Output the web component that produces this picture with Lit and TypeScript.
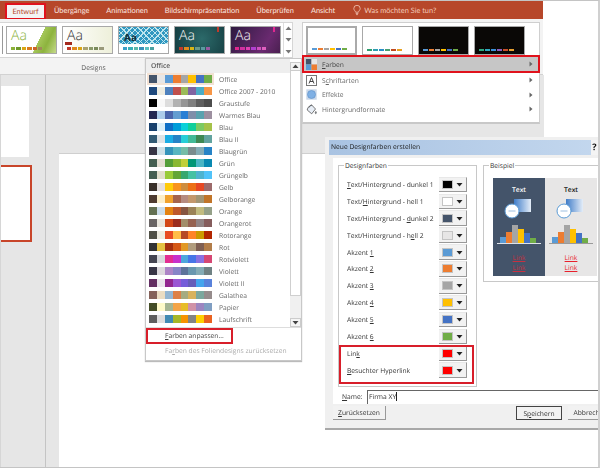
import { LitElement, html, css, svg } from "lit";
import { customElement } from "lit/decorators.js";

const TABS = ["Übergänge", "Animationen", "Bildschirmpräsentation", "Überprüfen", "Ansicht"];

const SCHEMES: [string, string[]][] = [
  ["Office", ["44546a", "e7e6e6", "5b9bd5", "ed7d31", "a5a5a5", "ffc000", "4472c4", "70ad47"]],
  ["Office 2007 - 2010", ["1f497d", "eeece1", "4f81bd", "c0504d", "9bbb59", "8064a2", "4bacc6", "f79646"]],
  ["Graustufe", ["000000", "f8f8f8", "dddddd", "b2b2b2", "969696", "808080", "5f5f5f", "4d4d4d"]],
  ["Warmes Blau", ["242852", "acccea", "4a66ac", "629dd1", "297fd5", "7f8fa9", "5aa2ae", "9d90a0"]],
  ["Blau", ["17406d", "dbeff9", "0f6fc6", "009dd9", "0bd0d9", "10cf9b", "7cca62", "a5c249"]],
  ["Blau II", ["335b74", "dfe3e5", "1cade4", "2683c6", "27ced7", "42ba97", "3e8853", "62a39f"]],
  ["Blaugrün", ["373545", "cee0e6", "3494ba", "58b6c0", "75bda7", "7a8c8e", "84acb6", "2683c6"]],
  ["Grün", ["455f51", "e3ded1", "549e39", "8ab833", "c0cf3a", "029676", "4ab5c4", "0989b1"]],
  ["Grüngelb", ["455f51", "e2dfcc", "99cb38", "63a537", "37a76f", "44c1a3", "4eb3cf", "51c3f9"]],
  ["Gelb", ["39302a", "e5dedb", "ffca08", "f8931d", "ce8d3e", "ec7016", "e64823", "9c6a6a"]],
  ["Gelborange", ["4e3b30", "fbeec9", "f0a22e", "a5644e", "b58b80", "c3986d", "a19574", "c17529"]],
  ["Orange", ["637052", "ccddea", "e48312", "bd582c", "865640", "9b8357", "c2bc80", "94a088"]],
  ["Orangerot", ["696464", "e9e5dc", "d34817", "9b2d1f", "a28e6a", "956251", "918485", "855d5d"]],
  ["Rotorange", ["505046", "eeece0", "e84c22", "ffbd47", "b64926", "ff8427", "cc9900", "b22600"]],
  ["Rot", ["323232", "e5c243", "a5300f", "d55816", "e19825", "b19c7d", "7f5f52", "b27d49"]],
  ["Rotviolett", ["454551", "d8d9dc", "e32d91", "c830cc", "4ea6dc", "4775e7", "8971e1", "d54773"]],
  ["Violett", ["373545", "dcd8dc", "ad84c6", "8784c7", "5d739a", "6997af", "84acb6", "6f8183"]],
  ["Violett II", ["632e62", "eae5eb", "92278f", "9b57d3", "755dd9", "665eb8", "45a5ed", "5982db"]],
  ["Galathea", ["85625a", "ebddc3", "94b6d2", "dd8047", "a5ab81", "d8b25c", "7ba79d", "968c8c"]],
  ["Papier", ["444d26", "fefac9", "a5b592", "f3a447", "e7bc29", "d092a7", "9c85c0", "809ec2"]],
  ["Laufschrift", ["5e5e5e", "dddddd", "418ab3", "a6b727", "f69200", "838383", "fecf00", "e96220"]],
];

const THUMBS = [
  { cls: "t-green", strip: ["8cb13a", "6f9a2a", "d9a514", "d97a1e", "c9642a", "a08a5a"] },
  { cls: "t-cream", strip: ["c0392b", "e08a1e", "d9a514", "a9a26f", "8b9a6a", "7a8a5a", "9a9a7a"] },
  { cls: "t-lattice", strip: ["3aa0c8", "3ab0b8", "5ab8a8", "3a90b8", "5ac0c0", "4aa0a0"] },
  { cls: "t-teal", strip: ["c0392b", "e08a1e", "d9b514", "6a9a8a", "5a9aa0", "9a5aa0"] },
  { cls: "t-purple", strip: ["e0288f", "d030a0", "e040b0", "b040d0", "d050c0", "e060c0"] },
];
const VARIANTS = [
  { cls: "v-white selected", strip: ["5b9bd5", "ed7d31", "a5a5a5", "ffc000", "4472c4", "70ad47"] },
  { cls: "v-white", strip: ["2e9e6e", "2e9eb0", "2a8fc8", "4aa070", "c04a20", "e8a020"] },
  { cls: "v-black", strip: ["5b9bd5", "ed7d31", "a5a5a5", "ffc000", "4472c4", "70ad47"] },
  { cls: "v-black", strip: ["2ea87e", "2ea8c0", "3a90d8", "8a60c0", "c8502a", "e8a030"] },
];

const COLOR_ROWS = [
  [html`<u>T</u>ext/Hintergrund - dunkel 1`, "000000"],
  [html`Text/<u>H</u>intergrund - hell 1`, "ffffff"],
  [html`Text/Hintergrund - <u>d</u>unkel 2`, "44546a"],
  [html`Text/Hintergrund - h<u>e</u>ll 2`, "e7e6e6"],
  [html`Akzent <u>1</u>`, "5b9bd5"],
  [html`Akzent <u>2</u>`, "ed7d31"],
  [html`Akzent <u>3</u>`, "a5a5a5"],
  [html`Akzent <u>4</u>`, "ffc000"],
  [html`Akzent <u>5</u>`, "4472c4"],
  [html`Akzent <u>6</u>`, "70ad47"],
] as const;
const LINK_ROWS = [
  [html`Lin<u>k</u>`, "ff0000"],
  [html`<u>B</u>esuchter Hyperlink`, "ff0000"],
] as const;

const caret = svg`<svg width="7" height="5" viewBox="0 0 7 5"><path d="M0.5 1h6L3.5 4.5z" fill="currentColor"/></svg>`;
const caretUp = svg`<svg width="7" height="5" viewBox="0 0 7 5"><path d="M0.5 4h6L3.5 0.5z" fill="currentColor"/></svg>`;
const sub = svg`<svg width="4" height="6" viewBox="0 0 4 6"><path d="M0.5 0.5v5L3.5 3z" fill="#666"/></svg>`;

@customElement("app-root")
export class AppRoot extends LitElement {
  static styles = css`
    :host { display: block; width: 600px; height: 468px; overflow: hidden; background: #fff;
      font-family: "Open Sans", "Noto Sans", sans-serif; font-size: 6.7px; color: #444; text-rendering: geometricPrecision; }
    u { text-underline-offset: 1px; text-decoration-thickness: 0.6px; }
    .app { position: relative; width: 600px; height: 468px; box-sizing: border-box;
      border-top: 1px solid #c4c4c4; border-bottom: 1px solid #c4c4c4; border-right: 2px solid #d0d0d0;
      display: flex; flex-direction: column; overflow: hidden; filter: blur(0.25px); }

    .tabs { width: 543px; height: 18px; background: #b7472a; display: flex; align-items: center; flex: none;
      color: #fbe9e2; font-family: Lato, "Open Sans", sans-serif; font-size: 7.4px; }
    .tab { white-space: nowrap; }
    .tab-active { width: 41px; height: 17px; margin: 3px 8px 0 5px; box-sizing: border-box; background: #f3f3f3;
      border: 2px solid #e0121c; color: #b7472a; display: flex; align-items: center; justify-content: center; flex: none; }
    .tab-list { display: flex; gap: 17px; }
    .tell { display: flex; align-items: center; gap: 3px; margin-left: 18px; color: #f3c9b9; }

    .ribbon { width: 543px; height: 55px; background: #f3f3f3; border-bottom: 1px solid #d2d2d2; flex: none; display: flex; flex-direction: column; }
    .gallery { width: 293px; height: 36px; margin-top: 3px; box-sizing: border-box; background: #fff; border: 1px solid #d6d6d6; border-left: 0; display: flex; align-items: center; }
    .edge { width: 2px; height: 28px; border-right: 1px solid #999; margin-right: 3px; flex: none; }
    .thumbs { display: flex; gap: 5px; }
    .thumb { position: relative; width: 51px; height: 28px; box-sizing: border-box; border: 1px solid #a8a8a8; overflow: hidden; background: #fff; }
    .aa { position: absolute; left: 4px; top: 1px; font-size: 14px; line-height: 16px; font-weight: 300; }
    .strip { position: absolute; left: 4px; bottom: 3px; display: flex; gap: 1px; }
    .strip i { display: block; width: 4.4px; height: 2.6px; }
    .t-green { background: linear-gradient(116deg, #fff 62%, #a5c75a 62.5%, #8db33e 78%, #c5da8a 100%); }
    .t-green .aa { color: #8db33e; }
    .t-cream { background: linear-gradient(90deg, #fff, #eef0da); }
    .t-cream .aa { color: #333; }
    .t-lattice { background-color: #2f97c0; background-image: linear-gradient(#0000 66%, #fff 66%),
      repeating-linear-gradient(45deg, #0000 0 3px, #bfe6ee 3px 4px),
      repeating-linear-gradient(-45deg, #0000 0 3px, #bfe6ee 3px 4px); }
    .t-lattice .aa { color: #12303c; font-weight: 700; left: 5px; top: 4px; font-size: 10px; line-height: 12px; }
    .t-teal { background: radial-gradient(circle at 55% 45%, #2c6a6a, #143c40); }
    .t-teal .aa, .t-purple .aa { color: #f4f4f4; }
    .t-purple { background: linear-gradient(120deg, #2e1a40, #6a2a70 70%, #4a2050); }
    .mark { position: absolute; top: 0; right: 5px; width: 2px; height: 5px; }
    .t-teal .mark { background: #c0392b; }
    .t-purple .mark { background: #e0288f; }
    .t-cream .mark { left: 2px; top: 15px; width: 7px; height: 3px; background: #a52a1e; }
    .gscroll { width: 8px; margin-left: auto; height: 34px; display: flex; flex-direction: column; border-left: 1px solid #ddd; color: #777; }
    .gscroll span { flex: 1; display: flex; align-items: center; justify-content: center; }
    .group-label { width: 187px; text-align: center; margin-top: 5px; color: #555; line-height: 10px; }

    .work { flex: 1; display: flex; min-height: 0; }
    .pane { width: 44px; background: #e6e6e6; border-right: 1px solid #c4c4c4; flex: none; padding-top: 11px; border-left: 1px solid #d6d6d6; }
    .slide-thumb { width: 28px; height: 71px; background: #fff; }
    .slide-thumb.sel { width: 29px; height: 73px; margin-top: 8px; border: 2px solid #c8452a; border-left: 0; }
    .gutter { width: 13px; background: #e6e6e6; flex: none; }
    .stage { flex: 1; display: flex; flex-direction: column; }
    .stage-top { width: 485px; height: 78px; background: #e6e6e6; flex: none; }
    .slide { flex: 1; background: #fff; border-top: 1px solid #cfcfcf; }

    .menu { position: absolute; left: 145px; top: 57px; width: 157px; height: 303px; background: #fff; box-sizing: border-box;
      border: 1px solid #c8c8c8; box-shadow: 0 1px 1px #bbb; display: flex; flex-direction: column; }
    .menu-body { display: flex; height: 268px; flex: none; border-bottom: 1px solid #ddd; }
    .menu-left { flex: 1; min-width: 0; }
    .menu-head { height: 14px; background: #eeeeee; font-weight: 600; color: #555; padding-left: 5px; line-height: 14px; }
    .scheme { height: 12px; display: flex; align-items: center; white-space: nowrap; padding-left: 3px; color: #666; }
    .scheme.current .cells { outline: 2px solid #f3e2d4; }
    .cells { display: flex; width: 63px; height: 7.5px; margin-right: 7px; flex: none; }
    .cells i { display: block; flex: 1; }
    .scroll { width: 11px; background: #fff; display: flex; flex-direction: column; color: #444; flex: none; padding-top: 3px; box-sizing: border-box; }
    .scroll .btn { height: 9px; box-sizing: border-box; border: 1px solid #ccc; background: #f4f4f4; display: flex; align-items: center; justify-content: center; flex: none; }
    .scroll .thumbbar { height: 225px; border: 1px solid #cfcfcf; border-top: 0; box-sizing: border-box; flex: none; }
    .scroll .rest { flex: 1; background: #f0f0f0; }
    .cmd { height: 16px; width: 87px; box-sizing: border-box; border: 2px solid #d81e2a; padding-left: 17px; line-height: 12px; color: #444; flex: none; white-space: nowrap; }
    .cmd2 { height: 14px; padding-left: 19px; line-height: 14px; color: #aaa; white-space: nowrap; flex: none; }
    .grip { text-align: center; color: #bbb; line-height: 5px; font-size: 7px; padding-right: 8px; letter-spacing: 0.5px; }

    .panel { position: absolute; left: 302px; top: 21px; width: 238px; height: 102px; box-sizing: border-box; background: #fff; border: 1px solid #cfcfcf; border-bottom: 2px solid #c8c8c8; display: flex; flex-direction: column; }
    .variants { display: flex; gap: 5px; padding: 3px 0 0 3px; height: 32px; flex: none; box-sizing: border-box; }
    .variants .thumb { height: 29px; }
    .v-white { background: #fff; }
    .v-black { background: #0a0806; }
    .v-white.selected { border: 2px solid #aaa; }
    .variants .strip i { width: 5px; height: 2.4px; }
    .prow { height: 14.5px; display: flex; align-items: center; padding-left: 3px; gap: 5px; color: #666; flex: none; }
    .prow .ico { width: 11px; height: 11px; flex: none; display: flex; }
    .prow .arrow { margin-left: auto; margin-right: 6px; display: flex; }
    .prow.on { height: 16px; background: #c6c6c6; color: #444; outline: 2px solid #e0121c; outline-offset: -1px; margin: 1px 0; }

    .dialog { position: absolute; left: 325px; top: 136px; width: 273px; height: 293px; background: #f0f0f0; border-bottom: 2px solid #a8a8a8; box-sizing: border-box; padding-top: 3px; display: flex; flex-direction: column; overflow: hidden; color: #333; }
    .dtitle { height: 15px; margin-left: 4px; background: linear-gradient(90deg, #a9c3e2, #c3d7ee); line-height: 14px; padding-left: 2px; color: #1a1a1a; display: flex; justify-content: space-between; flex: none; }
    .help { font-weight: 700; background: #f4f4f4; width: 7px; text-align: center; color: #111; font-size: 9px; }
    .dcontent { margin: 3px 0 0 8px; background: #fff; height: 246px; flex: none; padding: 7px 0 0 5px; box-sizing: border-box; }
    .cols { display: flex; gap: 6px; align-items: flex-start; }
    .fs { position: relative; border: 1px solid #c8c8c8; box-sizing: border-box; }
    .legend { position: absolute; left: 5px; top: -6px; background: #fff; padding: 0 1px; line-height: 11px; color: #333; }
    .fs-colors { width: 139px; padding: 10px 0 7px 0; flex: none; }
    .crow { height: 16.9px; display: flex; align-items: center; padding-left: 8px; white-space: nowrap; }
    .cbtn { margin-left: auto; margin-right: 9px; width: 28px; height: 15.5px; box-sizing: border-box; background: #f2f2f2; border-right: 1px solid #999; border-bottom: 1px solid #999; border-top: 1px solid #e8e8e8; display: flex; align-items: center; gap: 3px; padding-left: 3px; color: #222; flex: none; }
    .cbtn b { display: block; width: 11px; height: 9px; box-sizing: border-box; border: 1px solid #c4c4c4; }
    .hl { position: relative; }
    .hl::after { content: ""; position: absolute; left: 0; right: 2px; top: 0; bottom: -5px; border: 2px solid #d81e2a; pointer-events: none; }
    .fs-sample { flex: 1; min-width: 0; height: 117px; padding: 12px 0 0 9px; margin-right: -4px; }
    .preview { display: flex; width: 104px; height: 98px; }
    .pv { flex: 1; display: flex; flex-direction: column; align-items: center; padding-top: 7px; box-sizing: border-box; }
    .pv.dark { background: #44546a; color: #fff; }
    .pv.light { background: #e7e6e6; color: #111; }
    .pv-text { font-weight: 600; line-height: 10px; }
    .pv svg { display: block; margin-top: 3px; }
    .pv a { color: #e8202c; text-decoration: underline; line-height: 10px; }
    .pv .links { margin-top: 5px; display: flex; flex-direction: column; }
    .pv.dark a { color: #c83040; }
    .name-row { display: flex; align-items: center; margin-top: 3px; height: 14px; padding-left: 4px; }
    .name-row label { width: 25px; flex: none; }
    .input { flex: 1; height: 14px; box-sizing: border-box; border-top: 1px solid #666; border-left: 1px solid #666; line-height: 12px; padding-left: 1px; }
    .input span { border-right: 1px solid #222; }
    .dfoot { display: flex; padding: 2px 0 0 8px; gap: 6px; flex: none; }
    .b { height: 14px; box-sizing: border-box; background: #f2f2f2; border-right: 1.5px solid #999; border-bottom: 1.5px solid #999; display: flex; align-items: center; justify-content: center; flex: none; white-space: nowrap; }
    .b.reset { width: 53px; margin-right: 124px; }
    .b.save { width: 46px; border: 1.5px solid #444; }
    .b.cancel { width: 46px; }
  `;

  private preview(dark: boolean) {
    const base = dark ? "#dfe3ea" : "#9a9a9a";
    return html`<div class="pv ${dark ? "dark" : "light"}">
      <div class="pv-text">Text</div>
      <svg width="52" height="50" viewBox="0 0 52 50">
        <defs><linearGradient id="g${dark ? "d" : "l"}" x1="0" x2="1"><stop offset="0" stop-color="#3f7cc8"/><stop offset="1" stop-color="#e4edf8"/></linearGradient></defs>
        <rect x="21" y="1" width="17" height="13" fill="url(#g${dark ? "d" : "l"})"/>
        <circle cx="19" cy="13" r="7" fill="#fff" stroke="#5b9bd5" stroke-width="1"/>
        <path d="M15.5 13h7" stroke="#9dbfe0" stroke-width="1"/>
        <rect x="7" y="39" width="6" height="6" fill="#5b9bd5"/>
        <rect x="13" y="34" width="6" height="11" fill="#ed7d31"/>
        <rect x="19" y="27" width="6" height="18" fill="#a5a5a5"/>
        <rect x="25" y="31" width="6" height="14" fill="#ffc000"/>
        <rect x="31" y="35" width="6" height="10" fill="#4472c4"/>
        <rect x="37" y="40" width="6" height="5" fill="#70ad47"/>
        <path d="M4 45.5h44" stroke="${base}" stroke-width="1"/>
      </svg>
      <div class="links"><a>Link</a><a>Link</a></div>
    </div>`;
  }

  private colorRow(r: readonly [unknown, string]) {
    return html`<div class="crow"><span>${r[0]}</span>
      <div class="cbtn"><b style="background:#${r[1]}"></b>${caret}</div></div>`;
  }

  render() {
    return html`<div class="app">
      <div class="tabs">
        <div class="tab-active">Entwurf</div>
        <div class="tab-list">${TABS.map((t) => html`<span class="tab">${t}</span>`)}</div>
        <div class="tell">
          <svg width="8" height="11" viewBox="0 0 8 11" fill="none" stroke="#f3c9b9" stroke-width="0.8"><path d="M2.6 7.2C2.4 5.9 0.8 5.2 0.8 3.5a3.2 3.2 0 0 1 6.4 0c0 1.7-1.6 2.4-1.8 3.7zM2.7 8.4h2.6M3.1 9.6h1.8"/></svg>
          <span>Was möchten Sie tun?</span>
        </div>
      </div>
      <div class="ribbon">
        <div class="gallery">
          <div class="edge"></div>
          <div class="thumbs">
            ${THUMBS.map((t) => html`<div class="thumb ${t.cls}"><span class="aa">Aa</span><span class="mark"></span>
              <div class="strip">${t.strip.map((c) => html`<i style="background:#${c}"></i>`)}</div></div>`)}
          </div>
          <div class="gscroll"><span>${caretUp}</span><span>${caret}</span><span>${caret}</span></div>
        </div>
        <div class="group-label">Designs</div>
      </div>
      <div class="work">
        <div class="pane"><div class="slide-thumb"></div><div class="slide-thumb sel"></div></div>
        <div class="gutter"></div>
        <div class="stage"><div class="stage-top"></div><div class="slide"></div></div>
      </div>

      <div class="menu">
        <div class="menu-body">
          <div class="menu-left">
            <div class="menu-head">Office</div>
            ${SCHEMES.map(([n, cs], i) => html`<div class="scheme ${i === 0 ? "current" : ""}">
              <div class="cells">${cs.map((c) => html`<i style="background:#${c}"></i>`)}</div><span>${n}</span></div>`)}
          </div>
          <div class="scroll">
            <div class="btn">${caretUp}</div><div class="thumbbar"></div><div class="rest"></div><div class="btn">${caret}</div>
          </div>
        </div>
        <div class="cmd"><u>F</u>arben anpassen...</div>
        <div class="cmd2">Fa<u>r</u>ben des Foliendesigns zurücksetzen</div>
        <div class="grip">....</div>
      </div>

      <div class="panel">
        <div class="variants">
          ${VARIANTS.map((v) => html`<div class="thumb ${v.cls}"><div class="strip">${v.strip.map((c) => html`<i style="background:#${c}"></i>`)}</div></div>`)}
        </div>
        <div class="prow on">
          <span class="ico"><svg width="11" height="11" viewBox="0 0 11 11"><rect width="5.5" height="5.5" fill="#44546a"/><rect x="5.5" width="5.5" height="5.5" fill="#e7e6e6"/><rect y="5.5" width="5.5" height="5.5" fill="#5b9bd5"/><rect x="5.5" y="5.5" width="5.5" height="5.5" fill="#ed7d31"/></svg></span>
          <span><u>F</u>arben</span><span class="arrow">${sub}</span>
        </div>
        <div class="prow">
          <span class="ico"><svg width="11" height="11" viewBox="0 0 11 11"><rect x="0.5" y="0.5" width="10" height="10" fill="#fff" stroke="#777"/><path d="M3 8.5 5.5 2.5 8 8.5M3.9 6.5h3.2" fill="none" stroke="#333" stroke-width="0.9"/></svg></span>
          <span>S<u>c</u>hriftarten</span><span class="arrow">${sub}</span>
        </div>
        <div class="prow">
          <span class="ico"><svg width="11" height="11" viewBox="0 0 11 11"><rect x="0.3" y="0.3" width="10.4" height="10.4" fill="#c8d6e8"/><circle cx="5.5" cy="5.5" r="4" fill="#7fb0e4" stroke="#5b8fc8" stroke-width="0.6"/></svg></span>
          <span>Effekte</span><span class="arrow">${sub}</span>
        </div>
        <div class="prow">
          <span class="ico"><svg width="11" height="11" viewBox="0 0 11 11" fill="none" stroke="#555" stroke-width="0.8"><path d="M2 3.5 5.5 0.8l4 4.2-3.8 4.8L1.2 6z" fill="#e8eef6"/><path d="M3 3.5c.5-2 2-2.4 3-2M9.8 7.5c.6 1 .8 1.8 0 2.2-.8-.4-.6-1.2 0-2.2z" fill="#9ab"/></svg></span>
          <span>Hintergrundformate</span><span class="arrow">${sub}</span>
        </div>
      </div>

      <div class="dialog">
        <div class="dtitle"><span>Neue Designfarben erstellen</span><span class="help">?</span></div>
        <div class="dcontent">
          <div class="cols">
            <div class="fs fs-colors">
              <span class="legend">Designfarben</span>
              ${COLOR_ROWS.map((r) => this.colorRow(r))}
              <div class="hl">${LINK_ROWS.map((r) => this.colorRow(r))}</div>
            </div>
            <div class="fs fs-sample">
              <span class="legend">Beispiel</span>
              <div class="preview">${this.preview(true)}${this.preview(false)}</div>
            </div>
          </div>
          <div class="name-row"><label><u>N</u>ame:</label><div class="input"><span>Firma XY</span></div></div>
        </div>
        <div class="dfoot">
          <div class="b reset"><span><u>Z</u>urücksetzen</span></div>
          <div class="b save"><span>S<u>p</u>eichern</span></div>
          <div class="b cancel">Abbrechen</div>
        </div>
      </div>
    </div>`;
  }
}
